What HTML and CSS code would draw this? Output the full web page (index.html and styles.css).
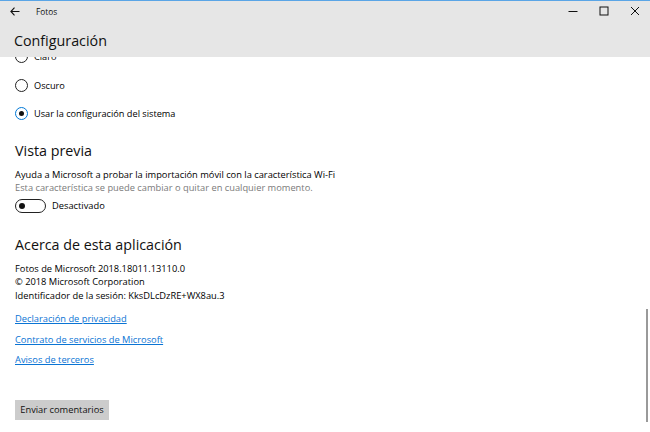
FILE: index.html
```html
<!DOCTYPE html>
<html>
<head>
<meta charset="utf-8">
<link rel="stylesheet" href="styles.css">
</head>
<body>
<div class="window">
  <header class="header">
    <div class="titlebar">
      <div class="tb-left">
        <svg class="back" width="10" height="9" viewBox="0 0 10 9"><path d="M4.5 0.7 L0.9 4.5 L4.5 8.3 M0.9 4.5 H9.5" fill="none" stroke="#111" stroke-width="1.1"/></svg>
        <span class="apptitle">Fotos</span>
      </div>
      <div class="tb-right">
        <svg class="wbtn" width="10" height="10" viewBox="0 0 10 10"><path d="M0.5 5.5 H9.5" stroke="#111" stroke-width="1"/></svg>
        <svg class="wbtn" width="10" height="10" viewBox="0 0 10 10"><rect x="1" y="1" width="8" height="8" fill="none" stroke="#111" stroke-width="1"/></svg>
        <svg class="wbtn" width="10" height="10" viewBox="0 0 10 10"><path d="M1 1 L9 9 M9 1 L1 9" stroke="#111" stroke-width="1"/></svg>
      </div>
    </div>
    <h1 class="pagetitle">Configuración</h1>
  </header>
  <main class="content">
    <div class="inner">
      <div class="radio-row"><span class="radio"></span><span>Claro</span></div>
      <div class="radio-row"><span class="radio"></span><span>Oscuro</span></div>
      <div class="radio-row"><span class="radio checked"></span><span>Usar la configuración del sistema</span></div>

      <h2 class="section">Vista previa</h2>
      <p class="line first">Ayuda a Microsoft a probar la importación móvil con la característica Wi-Fi</p>
      <p class="line muted">Esta característica se puede cambiar o quitar en cualquier momento.</p>
      <div class="toggle-row"><span class="toggle"><span class="knob"></span></span><span>Desactivado</span></div>

      <h2 class="section about">Acerca de esta aplicación</h2>
      <div class="info">
        <p class="iline">Fotos de Microsoft 2018.18011.13110.0</p>
        <p class="iline">© 2018 Microsoft Corporation</p>
        <p class="iline">Identificador de la sesión: KksDLcDzRE+WX8au.3</p>
      </div>
      <div class="links">
        <a class="link" href="#">Declaración de privacidad</a>
        <a class="link" href="#">Contrato de servicios de Microsoft</a>
        <a class="link" href="#">Avisos de terceros</a>
      </div>
      <button class="feedback">Enviar comentarios</button>
    </div>
    <div class="scrollbar"></div>
  </main>
</div>
</body>
</html>
```

FILE: styles.css
```css
* { box-sizing: border-box; }
html, body { margin: 0; padding: 0; }
body {
  width: 650px;
  height: 432px;
  overflow: hidden;
  font-family: "Open Sans", "Noto Sans", sans-serif;
  font-size: 9.3px;
  color: #000;
  background: #fff;
}
.window {
  width: 650px;
  height: 432px;
  display: flex;
  flex-direction: column;
  border-top: 1px solid #5aa5e6;
}
.header {
  background: #e6e6e6;
  height: 56px;
  flex: none;
}
.titlebar {
  height: 20px;
  display: flex;
  align-items: center;
  justify-content: space-between;
}
.tb-left {
  display: flex;
  align-items: center;
  padding-left: 10px;
}
.back { margin-top: 1px; }
.apptitle {
  margin-left: 16px;
  font-size: 8.3px;
  color: #111;
}
.tb-right {
  display: flex;
  align-items: center;
  gap: 21px;
  padding-right: 10px;
}
.pagetitle {
  margin: 8px 0 0 14px;
  font-weight: 400;
  font-size: 14.3px;
  line-height: 24px;
  color: #111;
}
.content {
  flex: 1;
  position: relative;
  overflow: hidden;
  display: flow-root;
}
.inner {
  margin-top: -14.5px;
  padding-left: 15px;
}
.radio-row {
  height: 28.5px;
  display: flex;
  align-items: center;
  gap: 6px;
  font-size: 9.2px;
}
.radio {
  width: 13px;
  height: 13px;
  border: 1.5px solid #222;
  border-radius: 50%;
  display: inline-flex;
  align-items: center;
  justify-content: center;
  flex: none;
}
.radio.checked { border-color: #0078d7; }
.radio.checked::after {
  content: "";
  width: 5px;
  height: 5px;
  border-radius: 50%;
  background: #111;
}
.section {
  margin: 11px 0 0 0;
  font-weight: 400;
  font-size: 14.3px;
  line-height: 24px;
  color: #111;
}
.line {
  margin: 0;
  line-height: 13px;
}
.line.first { margin-top: 4.5px; }
.muted { color: #7a7a7a; }
.toggle-row {
  margin-top: 2px;
  height: 20px;
  display: flex;
  align-items: center;
  gap: 6px;
}
.toggle {
  width: 31px;
  height: 14px;
  border: 1.5px solid #222;
  border-radius: 7px;
  display: flex;
  align-items: center;
  padding-left: 2.5px;
}
.knob {
  width: 6px;
  height: 6px;
  border-radius: 50%;
  background: #111;
}
.section.about { margin-top: 17px; }
.info { margin-top: 5px; }
.iline {
  margin: 0;
  line-height: 13.5px;
}
.links {
  margin-top: 7px;
  display: flex;
  flex-direction: column;
  align-items: flex-start;
}
.link {
  line-height: 20.5px;
  color: #0a74d4;
  text-decoration: underline;
}
.feedback {
  margin-top: 29px;
  width: 94px;
  height: 20px;
  border: none;
  background: #cccccc;
  font-family: inherit;
  font-size: 9.3px;
  color: #111;
  padding: 0;
  white-space: nowrap;
  display: block;
}
.scrollbar {
  position: absolute;
  right: 2px;
  top: 252px;
  width: 2px;
  height: 113px;
  background: #9a9a9a;
}
```
